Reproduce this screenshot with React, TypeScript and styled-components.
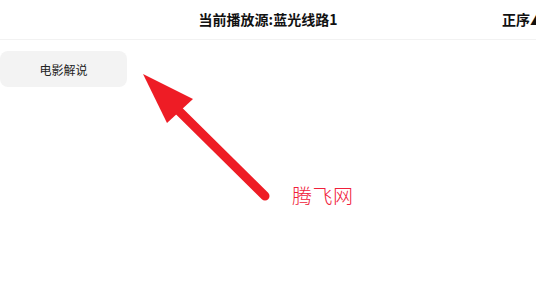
import styled, {createGlobalStyle} from 'styled-components';

const GlobalStyle = createGlobalStyle`
  html, body {
    margin: 0;
    padding: 0;
    background: #ffffff;
  }
  body {
    font-family: "Noto Sans CJK SC", "Noto Sans", sans-serif;
    color: #111;
  }
`;

const Page = styled.div`
  position: relative;
  width: 536px;
  height: 299px;
  overflow: hidden;
  background: #fff;
`;

const Header = styled.div`
  display: grid;
  grid-template-columns: 1fr auto 1fr;
  align-items: center;
  height: 40px;
  padding-bottom: 2px;
  border-bottom: 1px solid #f2f2f2;
  box-sizing: border-box;
`;

const Title = styled.div`
  grid-column: 2;
  font-size: 14px;
  font-weight: 700;
  color: #111;
`;

const Sort = styled.div`
  grid-column: 3;
  justify-self: end;
  margin-right: -8px;
  font-size: 14px;
  font-weight: 700;
  color: #111;
  white-space: nowrap;
`;

const Tabs = styled.div`
  display: flex;
  padding-top: 11px;
`;

const Tab = styled.div`
  width: 127px;
  height: 36px;
  border-radius: 8px;
  background: #f3f3f3;
  display: flex;
  align-items: center;
  justify-content: center;
  font-size: 12px;
  color: #222;
`;

const Arrow = styled.svg`
  position: absolute;
  left: 0;
  top: 0;
  pointer-events: none;
`;

const Watermark = styled.div`
  position: absolute;
  left: 292px;
  top: 181px;
  font-size: 20px;
  font-weight: 300;
  color: #f0203a;
  letter-spacing: 0.5px;
`;

export default function App() {
	return (
		<Page>
			<GlobalStyle />
			<Header>
				<Title>当前播放源:蓝光线路1</Title>
				<Sort>正序▲</Sort>
			</Header>
			<Tabs>
				<Tab>电影解说</Tab>
			</Tabs>
			<Arrow width="536" height="299" viewBox="0 0 536 299">
				<line x1="265" y1="196" x2="178" y2="110" stroke="#ee1c25" strokeWidth="9" strokeLinecap="round" />
				<polygon points="143,74 193,99 167,123" fill="#ee1c25" />
			</Arrow>
			<Watermark>腾飞网</Watermark>
		</Page>
	);
}
